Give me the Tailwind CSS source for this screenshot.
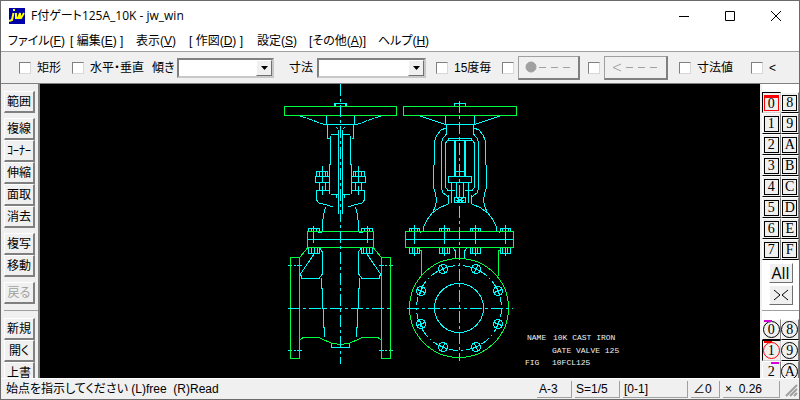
<!DOCTYPE html>
<html lang="ja">
<head>
  <meta charset="UTF-8"/>
  <title>F付ゲート125A_10K - jw_win</title>
  <meta name="viewport" content="width=device-width,initial-scale=1"/>
  <script src="https://cdn.jsdelivr.net/npm/@tailwindcss/browser@4"></script>
</head>

<body class="bg-white">
<div class="h-screen flex flex-col overflow-hidden border border-[#6b6b6b] bg-[#f0f0f0] text-black text-[12px] leading-4 font-['Liberation_Sans','Noto_Sans_CJK_JP',sans-serif] [font-feature-settings:'palt']">

  <!-- Title bar -->
  <header class="h-[29px] shrink-0 flex items-center bg-white pl-2">
    <svg class="w-4 h-4 shrink-0" viewBox="0 0 16 16">
      <rect width="16" height="16" fill="#0000a8"/>
      <g fill="none" stroke="#ffff00" stroke-width="2">
        <path d="M4.500 5 L3 12 L0 13 M4 2 h2"/>
        <path d="M7 5 L7 10 L9 10 L11 5 L11 10 L12 10 L15 5"/>
      </g>
    </svg>
    <h1 class="ml-[6px] text-[12px] leading-4 whitespace-nowrap font-['Open_Sans','Noto_Sans_CJK_JP',sans-serif]">F付ゲート125A_10K - jw_win</h1>
    <div class="ml-auto flex items-center gap-[34px] pr-[17px]">
      <button aria-label="Minimize"><svg class="w-3 h-3" viewBox="0 0 12 12" stroke="#000" fill="none"><path d="M1 6.500h10"/></svg></button>
      <button aria-label="Maximize"><svg class="w-3 h-3" viewBox="0 0 12 12" stroke="#000" fill="none"><path d="M1.500 1.500h9v9h-9z"/></svg></button>
      <button aria-label="Close"><svg class="w-3 h-3" viewBox="0 0 12 12" stroke="#000" fill="none"><path d="M1 1l10 10M11 1L1 11"/></svg></button>
    </div>
  </header>

  <!-- Menu -->
  <nav class="h-[21px] shrink-0 flex items-center bg-white pl-[7px] whitespace-nowrap">
    <a href="#" class="w-[62px]">ファイル(<u>F</u>)</a>
    <a href="#" class="w-[66px]">[ 編集(<u>E</u>) ]</a>
    <a href="#" class="w-[53px]">表示(<u>V</u>)</a>
    <a href="#" class="w-[68px]">[ 作図(<u>D</u>) ]</a>
    <a href="#" class="w-[52px]">設定(<u>S</u>)</a>
    <a href="#" class="w-[69px]">[その他(<u>A</u>)]</a>
    <a href="#">ヘルプ(<u>H</u>)</a>
  </nav>

  <!-- Line tool options -->
  <div class="h-[33px] shrink-0 flex items-center border-t border-t-[#a0a0a0] border-b border-b-[#808080] pl-[18px] whitespace-nowrap">
    <label class="flex items-center gap-[6px] w-[53px]">
      <input type="checkbox" class="appearance-none w-3 h-3 bg-white border border-t-[#808080] border-l-[#808080] border-b-[#d8d8d8] border-r-[#d8d8d8]"/>矩形
    </label>
    <label class="flex items-center gap-[6px] w-[80px]">
      <input type="checkbox" class="appearance-none w-3 h-3 bg-white border border-t-[#808080] border-l-[#808080] border-b-[#d8d8d8] border-r-[#d8d8d8]"/>水平・垂直
    </label>
    <label for="angle" class="w-[25px]">傾き</label>
    <div class="relative w-[97px] h-5 mr-[15px] border-2 border-t-[#808080] border-l-[#808080] border-b-[#c8c8c8] border-r-[#c8c8c8] bg-white">
      <select id="angle" class="appearance-none w-full h-full outline-none"><option></option></select>
      <span class="absolute right-0 inset-y-0 w-4 bg-[#f0f0f0] border border-t-white border-l-white border-b-[#707070] border-r-[#707070] flex items-center justify-center pointer-events-none">
        <svg class="w-[7px] h-1" viewBox="0 0 7 4"><path d="M0 0h7L3.500 4z"/></svg>
      </span>
    </div>
    <label for="size" class="w-[28px]">寸法</label>
    <div class="relative w-[109px] h-5 mr-[10px] border-2 border-t-[#808080] border-l-[#808080] border-b-[#c8c8c8] border-r-[#c8c8c8] bg-white">
      <select id="size" class="appearance-none w-full h-full outline-none"><option></option></select>
      <span class="absolute right-0 inset-y-0 w-4 bg-[#f0f0f0] border border-t-white border-l-white border-b-[#707070] border-r-[#707070] flex items-center justify-center pointer-events-none">
        <svg class="w-[7px] h-1" viewBox="0 0 7 4"><path d="M0 0h7L3.500 4z"/></svg>
      </span>
    </div>
    <label class="flex items-center gap-[6px] w-[66px]">
      <input type="checkbox" class="appearance-none w-3 h-3 bg-white border border-t-[#808080] border-l-[#808080] border-b-[#d8d8d8] border-r-[#d8d8d8]"/>15度毎
    </label>
    <input type="checkbox" aria-label="●---" class="appearance-none w-3 h-3 mr-1 bg-white border border-t-[#808080] border-l-[#808080] border-b-[#d8d8d8] border-r-[#d8d8d8]"/>
    <button aria-label="●---" class="w-[62px] h-6 mr-2 flex items-center justify-center bg-[#f0f0f0] border border-t-[#a0a0a0] border-l-[#a0a0a0] border-b-2 border-r-2 border-b-[#808080] border-r-[#808080]">
      <svg class="w-12 h-3" viewBox="0 0 48 12" stroke="#a0a0a0"><circle cx="6" cy="6" r="5" fill="#a0a0a0"/><path d="M14 6.500h7M26 6.500h7M38 6.500h7"/></svg>
    </button>
    <input type="checkbox" aria-label="&lt;---" class="appearance-none w-3 h-3 mr-1 bg-white border border-t-[#808080] border-l-[#808080] border-b-[#d8d8d8] border-r-[#d8d8d8]"/>
    <button aria-label="&lt;---" class="w-[64px] h-6 mr-[11px] flex items-center justify-center bg-[#f0f0f0] border border-t-[#a0a0a0] border-l-[#a0a0a0] border-b-2 border-r-2 border-b-[#808080] border-r-[#808080]">
      <svg class="w-12 h-3" viewBox="0 0 48 12" stroke="#a0a0a0" fill="none"><path d="M9 3L1 6.500L9 10M14 6.500h7M26 6.500h7M38 6.500h7"/></svg>
    </button>
    <label class="flex items-center gap-[6px] w-[72px]">
      <input type="checkbox" class="appearance-none w-3 h-3 bg-white border border-t-[#808080] border-l-[#808080] border-b-[#d8d8d8] border-r-[#d8d8d8]"/>寸法値
    </label>
    <label class="flex items-center gap-[6px]">
      <input type="checkbox" class="appearance-none w-3 h-3 bg-white border border-t-[#808080] border-l-[#808080] border-b-[#d8d8d8] border-r-[#d8d8d8]"/>&lt;
    </label>
  </div>

  <main class="flex-1 min-h-0 flex">
    <!-- Left tools -->
    <aside id="tools" class="w-[39px] shrink-0 overflow-hidden pl-[3px] pt-[7px] border-r-2 border-r-[#808080]"></aside>

    <!-- Drawing -->
    <section class="flex-1 min-w-0 bg-black">
      <svg class="w-full h-full" viewBox="40 84 720 294" fill="none" stroke="#00ffff" shape-rendering="crispEdges">
        <defs>
          <!-- side view, left half -->
          <g id="side-half">
            <path stroke-dasharray="6 1" d="M300.500 116L323 124"/>
            <path d="M323 124.500h4M326.500 116v8M327.500 125v13.500h2M330.500 136v28h-1v29.500M338.500 130v84M336 127l2 2M331 134.500h7M331 194.500h6l-1 3"/>
            <path d="M316.500 176v-4.500h11v4.500M319.500 172v4M322.500 172v4M325.500 172v4M315.500 176.500h14v6h-14zM319.500 182.500v8M325.500 182.500v8M322.500 166v5M322.500 177v5M322.500 186v9"/>
            <path d="M329.500 190.500h-13V200L319 203L327 205L333 207M325.500 207L323.500 215L322.500 224V231"/>
            <path d="M308.500 231v-2.500h11v2.500M311.500 229v3M316.500 229v3M313.500 226v17M318 232.500h4"/>
            <path d="M308.500 248v5.500h11v-5.500M311.500 248v5M314.500 248v5M317.500 248v5"/>
            <path d="M314 254L300.500 274L302 278.500H319L322.500 274V252L319.500 248M321.500 278v10h1v20h1v19h1v10"/>
            <path d="M288 265.500h4M294 265.500h2M297 265.500h5M288 350.500h4M294 350.500h2M297 350.500h5"/>
            <path stroke="#00ff40" d="M290.500 257.500h9v101h-9zM300 257L307.500 248M300 340L303 337.500H318.500L331 343L340.500 344.500"/>
          </g>
          <!-- front view, left half -->
          <g id="front-half">
            <path d="M420 116L444 124h3M445.500 116v8M446.500 125v9L443 138L441.500 143V189L443 193L448.500 197V204"/>
            <path d="M446 128L441 130L437 135L434.500 141V162L433.500 168V187L435.500 194L436.500 200L435.500 206L432.500 213"/>
            <path d="M449 138.500L445.500 143V187L448 190.500H455M454.500 140v36M455.500 140v36M451.500 182v21M456.500 182v15M448.500 195v8"/>
            <path d="M448 204L440 207.500L432 213L427 220L424 226L423.500 231L420 232.500"/>
            <path d="M409.500 231v-2.500h10v2.500M411.500 229v3M417.500 229v3M414.500 225v19M439.500 231v-2.500h10v2.500M441.500 229v3M447.500 229v3M444.500 225v19"/>
            <path d="M409.500 248v5.500h10v-5.500M412.500 248v5M414.500 248v8M417.500 248v5M439.500 248v5.500h10v-5.500M442.500 248v5M444.500 248v8M447.500 248v5M453 248L455.500 251V259"/>
            <path stroke="#00ff40" d="M418.500 248.500L421.500 251V276M456 258.500h4"/>
          </g>
          <g id="hole">
            <circle r="4.500"/>
            <path d="M-6 0H6M0 -6V6"/>
          </g>
        </defs>

        <!-- side view -->
        <use href="#side-half"/>
        <use href="#side-half" transform="translate(681 0) scale(-1 1)"/>
        <path d="M334.500 106v-2.500h12v2.500M326 124.500h29M335.500 104v3M345.500 104v3M308 239.500h65M331.500 344v3h18v-3"/>
        <path stroke="#00ff40" d="M284.500 106.500h112v9h-112zM307.500 231.500h66v16h-66z"/>
        <path stroke-dasharray="12 3 3 3" d="M340.500 84V364M288 308.500H393"/>

        <!-- front view -->
        <use href="#front-half"/>
        <use href="#front-half" transform="translate(920 0) scale(-1 1)"/>
        <path d="M454.500 106v-2.500h11v2.500M446 124.500h28M448.500 138.500h23v2h-23zM455 171.500h10M448.500 176.500h23v6h-23zM454.500 197.500h11v5h-11zM456 200.500h8M457 198l6 4M457 202l6-4M406 239.500h107"/>
        <path stroke="#00ff40" d="M403.500 106.500h113v9h-113zM405.500 231.500h108v16h-108z"/>
        <circle cx="459" cy="308" r="49.500" stroke="#00ff40"/>
        <circle cx="459" cy="308" r="24.500"/>
        <circle cx="459" cy="308" r="42.500" stroke-dasharray="9 3 2 3"/>
        <path stroke-dasharray="12 3 3 3" d="M459.500 101V361M407 308.500H513"/>
        <use href="#hole" transform="translate(443 269) rotate(67)"/>
        <use href="#hole" transform="translate(476 269) rotate(-67)"/>
        <use href="#hole" transform="translate(421 291) rotate(22)"/>
        <use href="#hole" transform="translate(498 291) rotate(-22)"/>
        <use href="#hole" transform="translate(421 324) rotate(-22)"/>
        <use href="#hole" transform="translate(498 324) rotate(22)"/>
        <use href="#hole" transform="translate(443 347) rotate(-67)"/>
        <use href="#hole" transform="translate(476 347) rotate(67)"/>

        <!-- title block -->
        <g class="text-[8px] font-['Liberation_Mono',monospace]" fill="#f0f0f0" stroke="none">
          <text x="527" y="340">NAME</text>
          <text x="553" y="340">10K CAST IRON</text>
          <text x="552" y="353">GATE VALVE 125</text>
          <text x="525" y="365">FIG</text>
          <text x="552" y="365">10FCL125</text>
        </g>
      </svg>
    </section>

    <!-- Layers -->
    <aside class="w-[39px] shrink-0 overflow-hidden bg-white border-l-2 border-l-[#f0f0f0] pt-2">
      <div id="layers" class="grid grid-cols-2"></div>
      <div class="flex flex-col items-center gap-[2px] pt-[3px] pb-[5px] font-['Open_Sans',sans-serif]">
        <button class="w-6 h-5 text-[16px] leading-4 bg-[#f0f0f0] border border-t-white border-l-white border-b-[#707070] border-r-[#707070]">All</button>
        <button aria-label="><" class="w-6 h-5 flex items-center justify-center bg-[#f0f0f0] border border-t-white border-l-white border-b-[#707070] border-r-[#707070]">
          <svg class="w-4 h-3" viewBox="0 0 16 12" fill="none" stroke="#000"><path d="M1 1l6 5l-6 5M15 1L9 6l6 5"/></svg>
        </button>
      </div>
      <div class="border-t border-t-[#a0a0a0] mb-2"></div>
      <div id="groups" class="grid grid-cols-2"></div>
    </aside>
  </main>

  <!-- Status bar -->
  <footer class="h-[21px] shrink-0 flex items-center gap-[3px] border-t border-t-white pl-[5px] pr-[1px] whitespace-nowrap">
    <p class="flex-1">始点を指示してください (L)free&nbsp; (R)Read</p>
    <span class="w-[35px] h-[17px] pl-[2px] border-r border-b border-[#a0a0a0]">A-3</span>
    <span class="w-[45px] h-[17px] pl-[1px] border-r border-b border-[#a0a0a0]">S=1/5</span>
    <span class="w-[65px] h-[17px] pl-[1px] border-r border-b border-[#a0a0a0]">[0-1]</span>
    <span class="w-[29px] h-[17px] pl-[2px] border-r border-b border-[#a0a0a0]">∠0</span>
    <span class="w-[57px] h-[17px] pl-[2px] border-r border-b border-[#a0a0a0]">×&nbsp; 0.26</span>
    <svg class="w-[15px] h-4" viewBox="0 0 15 16" stroke="#a0a0a0" stroke-width="2"><path d="M3 15L14 4M7 15L14 8M11 15L14 12"/></svg>
  </footer>
</div>

<script>
  // null = gap, '-' = separator line
  const tools = ['範囲', null, '複線', 'ｺｰﾅｰ', '伸縮', '面取', '消去', null, '複写', '移動', null, '戻る', '-', '新規', '開く', '上書'];
  document.getElementById('tools').innerHTML = tools.map(t => {
    if (t === null) return '<div class="h-[5px]"></div>';
    if (t === '-') return '<div class="mt-[6px] mb-[7px] border-t border-t-[#a0a0a0]"></div>';
    const color = t === '戻る' ? 'text-[#a0a0a0]' : 'text-black';
    return `<button class="block w-[31px] h-[22px] leading-4 text-center whitespace-nowrap bg-[#f0f0f0] border border-t-white border-l-white border-b-2 border-r-2 border-b-[#808080] border-r-[#808080] ${color}">${t}</button>`;
  }).join('');

  const order = ['0', '8', '1', '9', '2', 'A', '3', 'B', '4', 'C', '5', 'D', '6', 'E', '7', 'F'];

  document.getElementById('layers').innerHTML = order.map(n => {
    const box = n === '0' ? 'border-[#ff0000] border-t-[3px]' : 'border-black';
    const edge = n === '0' ? 'border-t-black border-l-black border-b-[#d0d0d0] border-r-[#d0d0d0]' : 'border-t-white border-l-white border-b-black border-r-[#808080]';
    return `<button class="h-[21px] flex items-center justify-center bg-[#f0f0f0] border ${edge}">
      <span class="w-[15px] h-4 flex items-center justify-center border text-[14px] leading-3 font-['Liberation_Serif',serif] ${box}">${n}</span>
    </button>`;
  }).join('');

  // group marks: purple = has data, red = current
  const marks = { '0': 'left-[1px] bg-[#d800d8]', '1': 'left-[1px] bg-[#ff0000]', '2': 'right-[1px] bg-[#d800d8]' };
  document.getElementById('groups').innerHTML = order.slice(0, 6).map(n => {
    const ring = n === '1' ? 'border-[#ff0000] rounded-full' : n === '2' ? 'border-transparent' : 'border-black rounded-full';
    const edge = n === '1' ? 'border-t-black border-l-black border-b-[#d0d0d0] border-r-[#d0d0d0]' : 'border-t-white border-l-white border-b-black border-r-[#808080]';
    const mark = marks[n] ? `<i class="absolute top-0 w-2 h-[2px] ${marks[n]}"></i>` : '';
    return `<button class="relative h-[21px] flex items-center justify-center bg-[#f0f0f0] border ${edge}">${mark}
      <span class="w-[17px] h-[17px] shrink-0 flex items-center justify-center border text-[14px] leading-3 font-['Liberation_Serif',serif] ${ring}">${n}</span>
    </button>`;
  }).join('');
</script>
</body>
</html>
